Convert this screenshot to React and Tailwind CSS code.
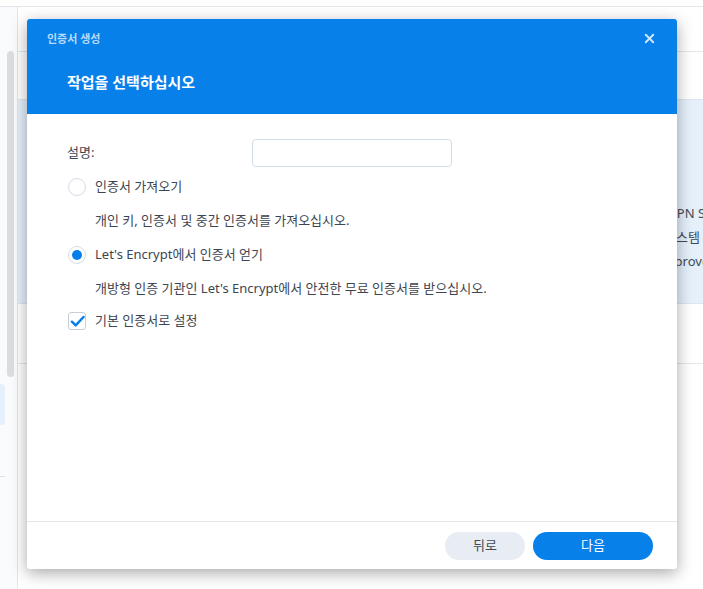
import { X } from 'lucide-react';

const font = { fontFamily: '"Noto Sans", "Noto Sans CJK KR", sans-serif' };

const Radio = ({ checked }) => (
  <span className="flex h-[18px] w-[18px] items-center justify-center rounded-full border border-[#d3dde8] bg-white">
    {checked && <span className="h-[10px] w-[10px] rounded-full bg-[#057feb]" />}
  </span>
);

const Checkbox = () => (
  <span className="flex h-[18px] w-[18px] items-center justify-center rounded-[3px] border border-[#c5cfda] bg-white">
    <svg width="15" height="15" viewBox="0 0 14 14" fill="none">
      <path d="M1.8 7.2 L5.3 10.6 L12.6 2.8" stroke="#057feb" strokeWidth="2.3" strokeLinecap="round" strokeLinejoin="round" />
    </svg>
  </span>
);

const App = () => {
  return (
    <div className="relative h-[589px] w-[703px] overflow-hidden bg-white text-[#3d4650]" style={font}>
      {/* background app */}
      <div className="flex h-full w-full flex-col">
        <div className="h-[7px] border-b border-[#e3e6ea]" />
        <div className="flex flex-1">
          {/* sidebar */}
          <div className="relative w-[18px] border-r border-[#e3e6ea] bg-[#fafbfc]">
            <div className="ml-[7px] mt-[44px] h-[326px] w-[7px] rounded-full bg-[#dcdcdc]" />
            <div className="mt-[7px] h-[41px] w-[5px] rounded-r bg-[#e6f0fc]" />
            <div className="mt-[51px] h-px w-[5px] bg-[#dfe3e8]" />
          </div>
          {/* content */}
          <div className="flex flex-1 flex-col overflow-hidden">
            <div className="h-[45px] border-b border-[#e3e6ea]" />
            <div className="h-[48px] border-b border-[#dfe5ec]" />
            <div className="flex h-[204px] flex-col justify-center gap-[2px] border-b border-[#dfe5ec] bg-[#e5f0fb] text-[13px] leading-[22px] text-[#414b55]">
              <span className="ml-[651px] mt-[70px] whitespace-nowrap">VPN S</span>
              <span className="ml-[646px] whitespace-nowrap">시스템 :</span>
              <span className="ml-[640px] whitespace-nowrap">Improvec</span>
            </div>
            <div className="h-[60px] border-b border-[#e3e6ea]" />
          </div>
        </div>
      </div>

      {/* dialog */}
      <div className="absolute left-[27px] top-[19px] flex h-[550px] w-[650px] flex-col overflow-hidden rounded-[3px] bg-white shadow-[0_4px_16px_rgba(0,0,0,0.35)]">
        <div className="relative h-[95px] bg-[#0780ea] px-5 text-white">
          <div className="pt-[12px] text-[11px] font-bold leading-[16px] text-[#b9dafa]">인증서 생성</div>
          <div className="mt-[24px] pl-5 text-[15px] font-bold leading-[22px]">작업을 선택하십시오</div>
          <button className="absolute right-[20px] top-[12px] text-[#cfe6fc]">
            <X size={15} strokeWidth={3} />
          </button>
        </div>

        <div className="flex-1 px-10 pt-[25px] text-[13px]">
          <div className="flex h-[28px] items-center">
            <span className="w-[185px]">설명:</span>
            <input className="h-[28px] w-[200px] rounded-[4px] border border-[#d3dde8] outline-none" />
          </div>
          <label className="mt-[7px] flex h-[26px] items-center gap-[9px] pl-[1px]">
            <Radio />
            <span>인증서 가져오기</span>
          </label>
          <div className="mt-[7px] h-[26px] pl-[28px] leading-[26px]">개인 키, 인증서 및 중간 인증서를 가져오십시오.</div>
          <label className="mt-[9px] flex h-[26px] items-center gap-[9px] pl-[1px]">
            <Radio checked />
            <span>Let's Encrypt에서 인증서 얻기</span>
          </label>
          <div className="mt-[7px] h-[26px] pl-[28px] leading-[26px]">개방형 인증 기관인 Let's Encrypt에서 안전한 무료 인증서를 받으십시오.</div>
          <label className="mt-[7px] flex h-[26px] items-center gap-[9px] pl-[1px]">
            <Checkbox />
            <span>기본 인증서로 설정</span>
          </label>
        </div>

        <div className="flex h-[48px] items-center justify-end gap-2 border-t border-[#e3e6ea] pr-6">
          <button className="h-[28px] w-[80px] rounded-full bg-[#e8edf3] text-[13px] text-[#414b55]">뒤로</button>
          <button className="h-[28px] w-[120px] rounded-full bg-[#0780ea] text-[13px] text-white">다음</button>
        </div>
      </div>
    </div>
  );
};

export default App;
